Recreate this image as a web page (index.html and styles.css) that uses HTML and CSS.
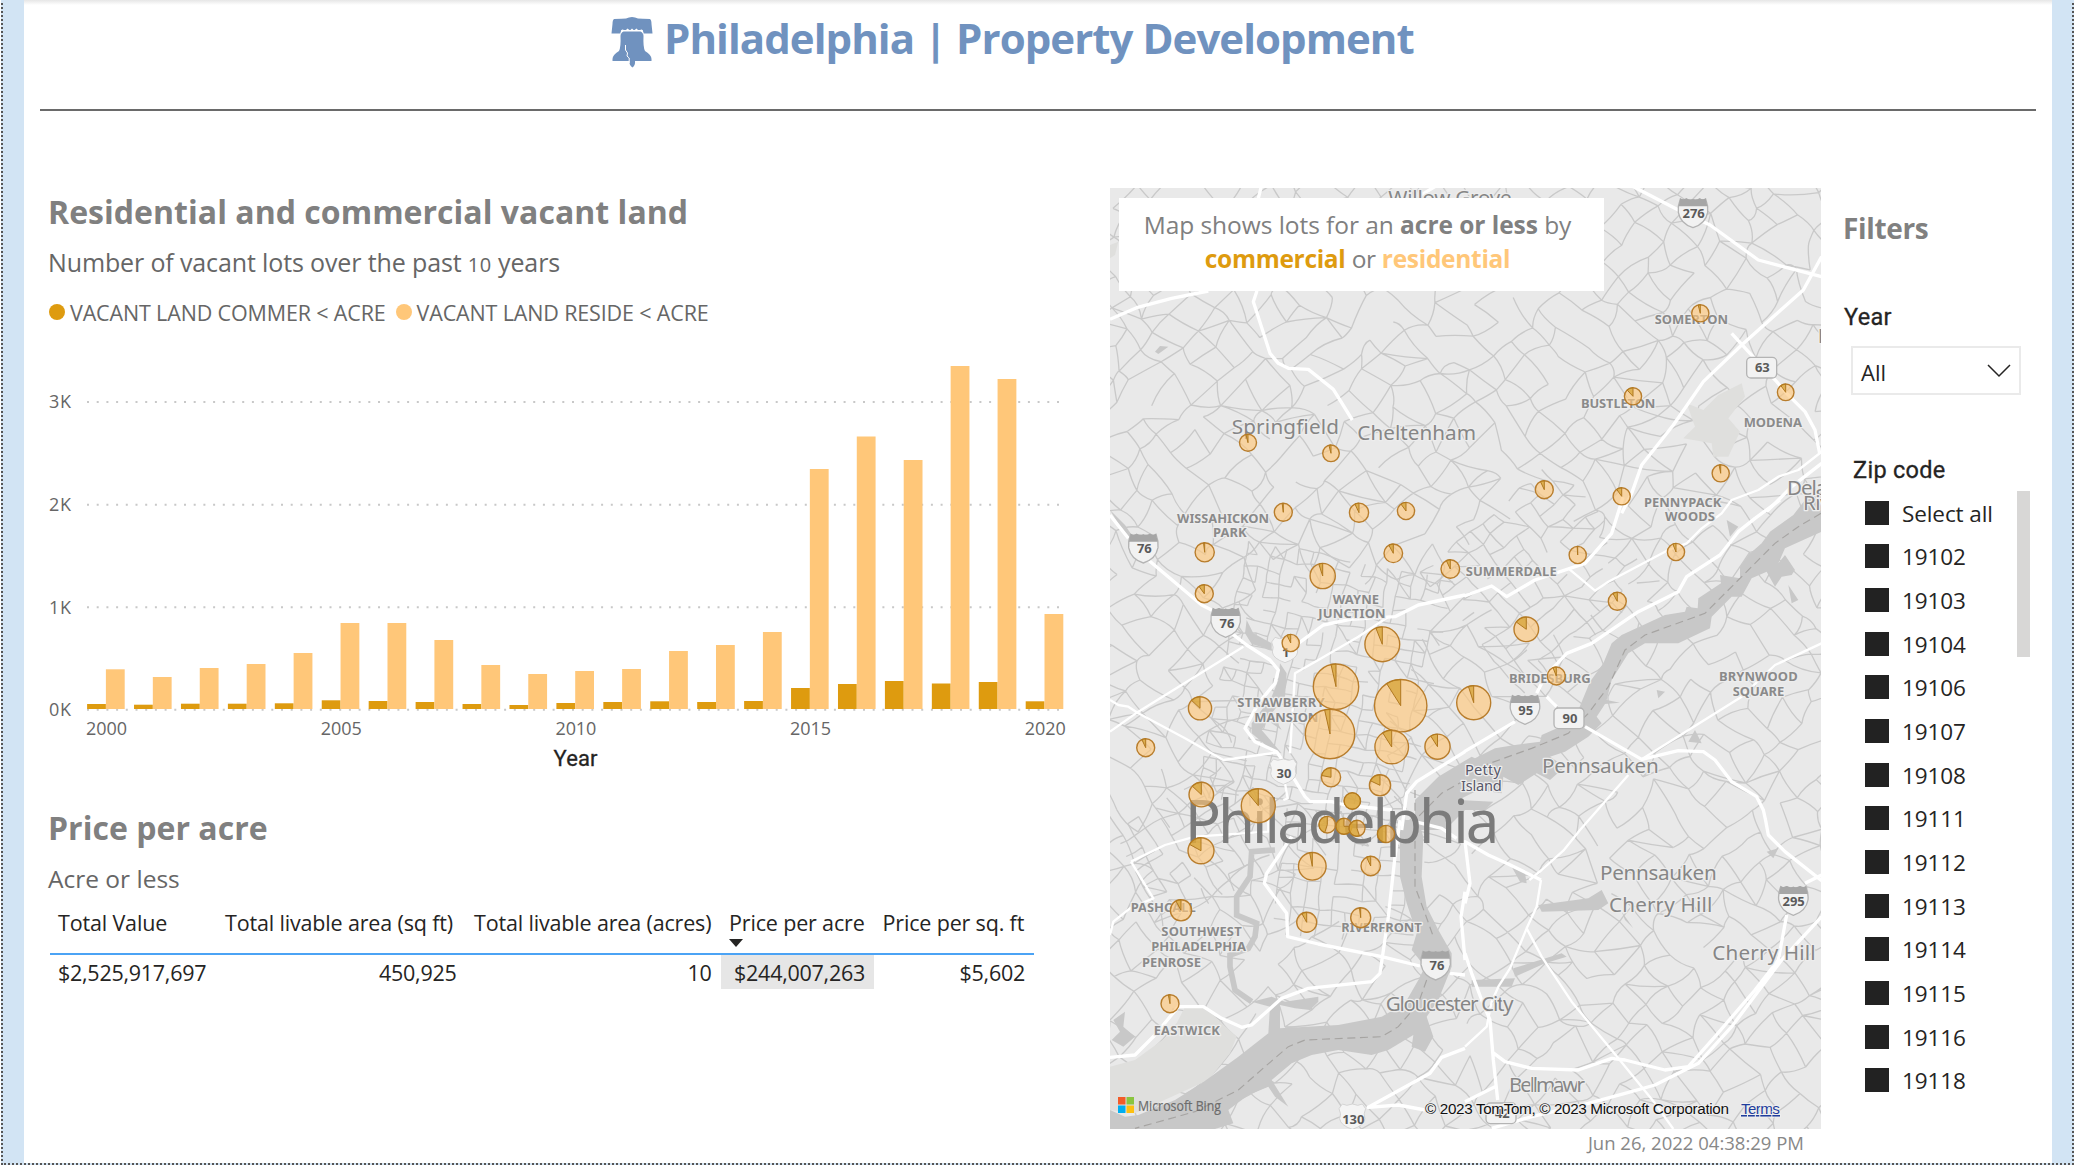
FILE: index.html
```html
<!DOCTYPE html>
<html lang="en">
<head>
<meta charset="utf-8">
<title>Philadelphia | Property Development</title>
<link rel="stylesheet" href="styles.css">
</head>
<body>
<div class="canvas">
  <div class="page">
    <header class="header">
      <svg class="bell" viewBox="0 0 42 52" width="42" height="52">
        <path d="M3 3Q12 2.500 15 2.500Q21 -.5 27 2.500Q31 2.500 39 3Q40.500 4 40.500 8L41.500 17.500H32.500L31.500 14H10.500L9.500 17.500H.5L1.500 8Q1.500 4 3 3Z"/>
        <path class="gap" d="M9.500 17.500Q10 13 12 13.500L14 15L16.500 12.500L19 14.500L21 12.500L23 14.500L25.500 12.500L28 15L30 13.500Q32 13 32.500 17.500Z"/>
        <path d="M12.500 15.500H29.500Q32.500 17 32.500 20Q32 31 34 35Q40.500 39 40.500 43V45H24Q24.500 49 21.500 51.500Q18 49 18.500 45H1.500V43Q1.500 39 8 35Q10 31 9.500 20Q9.500 17 12.500 15.500Z"/>
        <path class="crack" d="M14.500 29V34L16.500 37L16 40L18.200 42V47"/>
      </svg>
      <h1>Philadelphia | Property Development</h1>
    </header>
    <hr class="rule">
    <main class="main">
      <section class="left">
        <h2>Residential and commercial vacant land</h2>
        <p class="sub sub-a">Number of vacant lots over the past <small>10</small> years</p>
        <div class="legend">
          <i class="dot dark"></i><span>VACANT LAND COMMER &lt; ACRE</span>
          <i class="dot light"></i><span>VACANT LAND RESIDE &lt; ACRE</span>
        </div>
        <svg class="chart" id="chart" viewBox="49 340 1030 440" width="1030" height="440"></svg>
        <h2 class="price-title">Price per acre</h2>
        <p class="sub sub-b">Acre or less</p>
        <div class="table">
          <div class="th first">Total Value</div>
          <div class="th">Total livable area (sq ft)</div>
          <div class="th">Total livable area (acres)</div>
          <div class="th">Price per acre<i class="sort"></i></div>
          <div class="th">Price per sq. ft</div>
          <div class="td first">$2,525,917,697</div>
          <div class="td">450,925</div>
          <div class="td">10</div>
          <div class="td hot">$244,007,263</div>
          <div class="td">$5,602</div>
        </div>
      </section>
      <section class="mapcol">
        <div class="map">
          <svg class="mapsvg" viewBox="0 0 711 941" width="711" height="941">
            <defs>
              <g id="interstate"><path class="sh" d="M-38 -40Q-30 -34 -20 -40Q-10 -34 0 -38Q10 -34 20 -40Q30 -34 38 -40Q46 -20 44 0Q38 34 0 46Q-38 34 -44 0Q-46 -20 -38 -40Z"/><path class="shtop" d="M-38 -42Q-30 -36 -20 -42Q-10 -36 0 -40Q10 -36 20 -42Q30 -36 38 -42L43 -18H-43Z"/></g>
              <path id="us" class="sh2" d="M-30 -38Q-18 -30 0 -38Q18 -30 30 -38L40 -24Q32 -8 38 6Q36 26 0 38Q-36 26 -38 6Q-32 -8 -40 -24Z"/>
              <rect id="state" class="sh" x="-45" y="-31" width="90" height="62" rx="13"/>
            </defs>
            <g id="streets" class="streets"></g>
            <g class="park">
              <path class="tE" d="M15 740L90 720L200 640L240 560L300 560L340 600L395 650L375 700L310 780L200 830L90 880L15 870Z"/>
              <path class="tB" d="M830 610L840 650L790 715L825 755L790 830L745 830L740 790L655 775L690 740L665 670L715 690L760 645Z"/>
              <path class="tA" d="M15 195L40 185L30 225L15 235Z"/>
            </g>
            <g class="water">
              <path class="tD" d="M1070 -20L1020 0L985 45L915 95L890 130L850 165L825 200L825 235L765 225L768 250L700 295L698 325L665 320L660 335L600 345L470 405L440 430L415 490L375 545L340 630L320 665L230 705L225 725L150 735L90 745L30 775L20 770L-80 830L-150 900L-150 990L-60 990L0 930L60 930L85 905L-20 900L40 870L110 880L115 830L160 855L215 820L255 840L300 800L255 770L300 755L370 710L410 670L395 650L420 612L465 608L425 600L440 540L490 460L540 430L640 430L735 385L740 350L800 290L830 290L860 235L905 215L930 260L950 230L980 225L990 210L960 165L940 190L960 145L1070 95Z"/>
              <path class="tB" d="M1070 920L1030 960L1000 1000L1070 1000Z"/>
              <path class="tE" d="M885 0L940 0L955 50L950 170L965 260L1000 330L1040 400L1040 440L1000 540L965 590L985 650L960 695L920 680L925 645L850 690L800 705L700 690L620 705L560 730L500 780L550 860L510 830L490 800L430 825L370 870L385 910L330 927L15 927V870L60 890L100 885L210 840L290 790L400 710L490 640L495 560L440 545L500 530L540 545L640 530L640 545L615 570L570 565L525 555L525 625L700 615L830 590L900 550L940 480L960 440L920 390L935 340L905 250L885 170Z"/>
              <path class="tE" d="M25 600L60 575L55 620L90 650L55 680L20 660L45 635Z"/>
              <path class="tC" d="M425 360L445 400L500 430V450L440 432L420 400ZM525 490L545 520L540 590L500 640L470 690L530 760L500 750L440 700V670L500 590L520 540ZM500 640L530 690L500 670Z"/>
              <path class="tC" d="M15 30L60 75L90 120L60 105Z"/>
              <path class="tD" d="M970 255L1000 300L980 310ZM785 60L820 80L795 110ZM575 570L600 575L580 595ZM690 690L710 730L670 725Z"/>
              <path class="tF" d="M220 255L370 235L410 210L430 250L400 270L230 275ZM140 140L180 160L185 190L165 185ZM145 445L290 400L305 410L240 430L150 470ZM470 275L505 325L480 300ZM905 95L940 85L925 115ZM20 480L150 475L140 500L20 500Z"/>
              <path class="tA" d="M150 515L165 498L190 500L160 522Z"/>
            </g>
            <path class="creek tE" d="M510 90L440 95L435 170L395 230V285L455 310L450 350L430 385L375 405V440L390 510L440 545"/>
            <g class="ferry">
              <path class="tD" d="M1068 40L1000 80L930 130L720 340L540 405L480 450L430 560L370 640L310 700L200 745L60 795"/>
              <path class="tC" d="M1080 840L1010 880L940 950"/>
              <path class="tE" d="M930 -90V200L960 280L985 350M965 480L940 550L880 620L830 650L600 660L550 680L480 740L400 810L270 875L90 925"/>
            </g>
            <g class="road">
              <path class="tA" d="M470 15L460 55L455 335L445 365L495 520L520 550L550 565L610 568L685 628L742 720M15 418L95 383L200 355L310 333M940 50L990 20"/>
              <path class="tB" d="M505 20L640 90L735 135L880 240L1070 290M1070 230L1015 330L830 495L715 605L625 735L530 855L500 940L470 1000M800 460L850 515L935 605L965 640L1020 695L1050 750L1064 820M1070 850L980 920L905 995"/>
              <path class="tD" d="M474 -8L440 100L360 190L210 240L125 290L80 258L-2 288M945 0L870 55L820 95L765 165L665 230L640 275L520 335L380 430L305 460L240 530L215 580M-2 755L150 665M245 590L275 620M360 680L530 778L640 752L715 755L750 780L800 845L875 890L895 930L902 962L910 1005L960 1055L1070 1142"/>
              <path class="tC" d="M15 45L70 115M130 180L290 315L330 335M380 400L425 435L495 480L520 510L510 550L460 610L420 685L450 725L515 755L545 800L600 890L615 905L680 905L720 915L860 930M580 430L655 375L735 358L870 350L940 315L1080 285M1080 755L935 845L905 880L890 990"/>
              <path class="tE" d="M885 0L870 110L850 290L825 460L800 485L610 505L530 535L440 615L410 622L350 595L295 560L220 560L150 645L90 705L15 712M560 50L485 160L478 190L545 280L548 350L640 372L830 410L945 438M1035 460L1080 465M1080 685L1010 712L975 760L790 862L880 855L960 870M1080 215L1068 290L1080 420M930 5L1010 25L1055 55"/>
              <path class="tF" d="M228 180L125 130L70 105L0 65L15 190L0 250M0 400L20 460L50 540L75 600L85 720L98 840M80 695L120 725L200 745L340 750L440 715L480 720L600 750L670 740L750 650L870 510L940 420L965 285M80 925L200 890L370 850L480 820L570 795L700 730L800 620L950 420L1070 290M0 845L90 800M1020 190L1070 165"/>
            </g>
            <g class="road thin">
              <path class="tB" d="M1070 815L1000 870L940 890L880 930L800 960L770 1000L710 1045L665 1090L610 1110L430 1205L390 1232L310 1165"/>
              <path class="tC" d="M15 695L100 635L415 440M15 600L40 615L70 620L100 640L240 715L355 780L520 757M555 760L570 520L640 480L760 410L850 350M540 850L548 895L535 900"/>
              <path class="tD" d="M530 778L830 590L930 495L1070 430M490 825L345 990L295 1052L230 1110L193 1140"/>
              <path class="tE" d="M78 125L180 75L270 50L490 35V0M78 125L145 235L75 265L25 305L15 345"/>
              <path class="tF" d="M228 180L215 260L185 325L135 445L100 500L80 545L65 620L0 680M185 325L230 410L320 545L460 715L570 850L625 927"/>
            </g>
            <g class="shields">
              <g class="tB"><use href="#interstate" x="684" y="97"/><text x="686" y="115">276</text><use href="#state" x="890" y="563"/><text x="892" y="577">63</text></g>
              <g class="tC"><use href="#interstate" x="115" y="143"/><text x="118" y="160">76</text><use href="#interstate" x="362" y="366"/><text x="366" y="383">76</text><use href="#us" x="540" y="450"/><text x="542" y="470">1</text><use href="#us" x="535" y="815"/><text x="537" y="834">30</text></g>
              <g class="tD"><use href="#interstate" x="180" y="627"/><text x="182" y="645">95</text><use href="#state" x="312" y="655"/><text x="315" y="670">90</text></g>
              <g class="tE"><use href="#interstate" x="992" y="434"/><text x="996" y="451">76</text><use href="#us" x="742" y="890"/><text x="745" y="911">130</text></g>
              <g class="tF"><use href="#interstate" x="985" y="240"/><text x="986" y="258">295</text><use href="#state" x="108" y="880"/><text x="112" y="893">42</text></g>
            </g>
            <g class="town">
              <g class="tA"><text x="850" y="76" textLength="370">Willow Grove</text><text x="380" y="762" textLength="322">Springfield</text><text x="757" y="781" textLength="356">Cheltenham</text></g>
              <g class="tB"><text x="1058" y="490">Bensalem</text><text x="966" y="945" textLength="250">Delaware</text><text x="1014" y="989" textLength="140">River</text></g>
              <g class="tD"><text x="231" y="819" textLength="350">Pennsauken</text></g>
              <g class="tE"><text x="842" y="573" textLength="384">Gloucester City</text></g>
              <g class="tF"><text x="405" y="179" textLength="350">Pennsauken</text><text x="432" y="275" textLength="310">Cherry Hill</text><text x="742" y="420" textLength="310">Cherry Hill</text><text x="132" y="815" textLength="228">Bellmawr</text></g>
            </g>
            <g class="city"><text class="tE" x="239" y="69" textLength="944">Philadelphia</text></g>
            <g class="isle tD"><text x="0" y="824" textLength="108">Petty</text><text x="-12" y="872" textLength="122">Island</text></g>
            <g class="hood">
              <g class="tB"><text x="569" y="432" textLength="220">SOMERTON</text><text x="348" y="684" textLength="223">BUSTLETON</text><text x="836" y="742" textLength="175">MODENA</text><text x="537" y="980" textLength="232">PENNYPACK</text></g>
              <g class="tC"><text x="216" y="68" textLength="276">WISSAHICKON</text><text x="324" y="112" textLength="101">PARK</text><text x="683" y="311" textLength="139">WAYNE</text><text x="640" y="355" textLength="202">JUNCTION</text><text x="397" y="621" textLength="262">STRAWBERRY</text><text x="448" y="665" textLength="192">MANSION</text></g>
              <g class="tD"><text x="600" y="64" textLength="150">WOODS</text><text x="2" y="228" textLength="273">SUMMERDALE</text><text x="132" y="549" textLength="245">BRIDESBURG</text><text x="762" y="544" textLength="236">BRYNWOOD</text><text x="803" y="588" textLength="155">SQUARE</text></g>
              <g class="tE"><text x="77" y="277" textLength="195">PASHCALL</text><text x="169" y="349" textLength="241">SOUTHWEST</text><text x="139" y="394" textLength="284">PHILADELPHIA</text><text x="111" y="442" textLength="177">PENROSE</text><text x="709" y="336" textLength="241">RIVERFRONT</text><text x="146" y="646" textLength="199">EASTWICK</text></g>
            </g>
            <g id="pies" class="pies"></g>
            <g class="logo"><path fill="#f25c29" d="M8 909h7.500v7.500H8z"/><path fill="#8ac53f" d="M16.500 909h7.500v7.500h-7.500z"/><path fill="#00aeef" d="M8 917.500h7.500v7.500H8z"/><path fill="#fdc010" d="M16.500 917.500h7.500v7.500h-7.500z"/><text x="28" y="922.500" textLength="83" lengthAdjust="spacingAndGlyphs">Microsoft Bing</text></g>
            <g class="credit"><text x="315" y="926" textLength="304">© 2023 TomTom, © 2023 Microsoft Corporation</text><text class="terms" x="631" y="926" textLength="39">Terms</text></g>
          </svg>
          <div class="callout">
            <div>Map shows lots for an <b>acre or less</b> by</div>
            <div class="line2"><b class="c-dark">commercial</b> or <b class="c-light">residential</b></div>
          </div>
        </div>
        <div class="stamp">Jun 26, 2022 04:38:29 PM</div>
      </section>
      <aside class="filters">
        <h2 class="filters-title">Filters</h2>
        <div class="label l-year">Year</div>
        <div class="select"><span>All</span><svg width="24" height="14" viewBox="0 0 24 14"><path d="M1 1L12 12L23 1"/></svg></div>
        <div class="label l-zip">Zip code</div>
        <div class="zipbox"><div class="zips" id="zips"></div><div class="thumb"></div></div>
      </aside>
    </main>
  </div>
</div>
<script src="app.js"></script>
</body>
</html>
```
FILE: styles.css
```css
* { box-sizing: border-box; }
body { margin: 0; background: #fff; width: 2077px; height: 1166px; overflow: hidden; font-family: "Open Sans", "Noto Sans", sans-serif; color: #252423; }
h1, h2, p { margin: 0; white-space: nowrap; }
span { white-space: nowrap; }
.canvas { width: 2073px; height: 1167px; margin: -2px 0 0 1px; border: 2px dotted #555; background: #d2e4f4; padding: 0 20px 0 21px; }
.page { height: 1163px; background: linear-gradient(#e6e6e6, #fff 5px); }
.header { display: flex; height: 109px; padding: 7px 0 0 587px; }
.bell { margin-top: 9px; margin-right: 11px; fill: #7092bf; }
.bell .gap { fill: #fff; }
.bell .crack { fill: none; stroke: #fff; stroke-width: 1; }
h1 { font-size: 42px; line-height: 62px; color: #7092bf; font-weight: 700; letter-spacing: -.960px; }
.rule { margin: 0 16px; border: 0; height: 2px; background: #6a6a6a; }
.main { display: flex; padding-left: 25px; }
.left { width: 1061px; flex: none; padding-top: 79px; }
h2 { font-size: 32px; line-height: 44px; color: #808080; font-weight: 700; margin-left: -1px; letter-spacing: .030px; }
.sub { color: #666; line-height: 36px; margin: 10px 0 0 -1px; }
.sub-a { font-size: 25px; letter-spacing: -.130px; }
.sub-a small { font-size: 20px; letter-spacing: .5px; }
.sub-b { font-size: 24.500px; margin-top: 11px; }
.legend { display: flex; align-items: center; height: 30px; margin-top: 14px; font-size: 21.500px; color: #666; line-height: 30px; }
.dot { width: 16px; height: 16px; border-radius: 50%; margin-right: 5px; }
.legend span { margin-top: 1px; letter-spacing: -.150px; }
.legend span + .dot { margin-left: 10px; }
.dark { background: #de9b0f; }
.light { background: #ffc779; }
.chart { display: block; margin-top: 13px; font-size: 18px; fill: #666; }
.chart .grid { stroke: #c8c8c8; stroke-width: 2; stroke-dasharray: 2 7.7; }
.chart .c { fill: #de9b0f; }
.chart .r { fill: #ffc779; }
.chart .mid { text-anchor: middle; }
.chart .axis { font: 400 22px Roboto, sans-serif; fill: #252423; stroke: #252423; stroke-width: .3; text-anchor: middle; }
.price-title { margin-top: 26px; }
.table { display: grid; grid-template-columns: 166.500px 249px 255px 153.500px 160px; margin: 11px 0 0 1px; font-size: 21.500px; letter-spacing: -.160px; width: 984px; white-space: nowrap; }
.th { height: 47px; line-height: 30px; border-bottom: 2px solid #4ba3f5; padding-left: 8.500px; }
.th.first { padding-left: 8px; }
.td { height: 34px; line-height: 35px; text-align: right; padding-right: 9px; letter-spacing: -.260px; }
.td.first { text-align: left; padding: 0 0 0 8px; }
.hot { background: #e6e6e6; }
.sort { display: block; width: 0; margin-top: 1px; border: 7.500px solid transparent; border-top: 8px solid #252423; border-bottom: 0; }
.mapcol { width: 711px; flex: none; padding-top: 77px; }
.map { position: relative; width: 711px; height: 941px; background: #e9e9e9; }
.mapsvg { display: block; font-family: "Noto Sans", "Open Sans", sans-serif; }
.callout { position: absolute; left: 9px; top: 10px; width: 485px; height: 93px; background: #fff; color: #808080; font-size: 24.500px; letter-spacing: -.050px; line-height: 34px; text-align: center; padding: 10px 8px 0 0; }
.line2 { letter-spacing: -.300px; }
.c-dark { color: #de9b0f; }
.c-light { color: #ffc779; }
.tA { transform: translate(-5px, -8px) scale(.33333); }
.tB { transform: translate(355px, -8px) scale(.33333); }
.tC { transform: translate(-5px, 312px) scale(.33333); }
.tD { transform: translate(355px, 312px) scale(.33333); }
.tE { transform: translate(-5px, 632px) scale(.33333); }
.tF { transform: translate(355px, 632px) scale(.33333); }
.streets { fill: none; stroke: #c9c9c9; stroke-width: 1.300; stroke-linejoin: round; }
.park { fill: #dfdfdd; }
.water { fill: #c8c8c8; }
.creek { fill: none; stroke: #c8c8c8; stroke-width: 17; }
.ferry { fill: none; stroke: #a6a4a2; stroke-width: 3.500; stroke-dasharray: 24 14; }
.road { fill: none; stroke: #fff; stroke-width: 10; stroke-linejoin: round; }
.road.thin { stroke-width: 7; }
.sh { fill: #f2f2f2; stroke: #b4b4b4; stroke-width: 4; }
.shtop { fill: #a6a6a6; }
.sh2 { fill: #f4f4f4; stroke: #d4d4d4; stroke-width: 3; }
.shields text { font-size: 39px; font-weight: 700; fill: #5a5a5a; text-anchor: middle; }
.town text, .hood text, .isle text { paint-order: stroke; stroke: #ededed; stroke-width: 8; stroke-linejoin: round; }
.town { font-size: 62px; fill: #868686; }
.hood { font-size: 39px; font-weight: 700; fill: #8a8a8a; }
.isle { font-size: 44px; fill: #58586a; }
.city { font-size: 180px; fill: #7b7b7b; }
.pies .base { fill: #ffc779; fill-opacity: .64; stroke: #b87d2c; stroke-width: 1.400; }
.pies .slice { fill: #cf9a20; fill-opacity: .62; stroke: #b07820; stroke-width: 1; }
.logo text { font: 14.500px "Open Sans", sans-serif; fill: #6c6c6c; stroke: #6c6c6c; stroke-width: .2; }
.credit { font: 15.300px "Liberation Sans", Arial, sans-serif; fill: #111; }
.credit text { paint-order: stroke; stroke: #eee; stroke-width: 2; }
.credit .terms { fill: #1f3d9c; text-decoration: underline; }
.stamp { text-align: right; padding-right: 17px; font-size: 18.500px; line-height: 28px; color: #888; }
.filters { width: 208px; padding: 97px 0 0 23px; flex: none; }
.filters-title { font-size: 28px; line-height: 40px; letter-spacing: -.350px; }
.label { font: 400 23.500px/32px Roboto, sans-serif; -webkit-text-stroke: .3px #252423; letter-spacing: .300px; }
.l-year { margin-top: 53px; }
.select { width: 170px; height: 49px; margin: 13px 0 0 7px; border: 2px solid #eaeaea; display: flex; align-items: center; justify-content: space-between; padding: 3px 8px 0; font-size: 22px; line-height: 40px; }
.select svg { fill: none; stroke: #252423; stroke-width: 1.500; margin-top: -3px; }
.l-zip { margin: 59px 0 0 9px; }
.zipbox { display: flex; justify-content: space-between; width: 186px; margin-top: 5px; }
.zips { padding-left: 21px; font-size: 22.500px; letter-spacing: -.100px; }
.zip { display: flex; align-items: center; height: 43.650px; line-height: 43px; }
.zip span { padding-top: 1px; }
.box { width: 24px; height: 24px; background: #222; margin-right: 13px; }
.thumb { width: 13px; height: 166px; background: #d8d7d6; }
```
FILE: app.js
```javascript
const NS = 'http://www.w3.org/2000/svg';
function add(parent, tag, attrs, text) {
  const e = document.createElementNS(NS, tag);
  for (const k in attrs) e.setAttribute(k, attrs[k]);
  if (text !== undefined) e.textContent = text;
  parent.appendChild(e);
  return e;
}

// Column chart: bar heights in pixels, 2000 to 2020
const commercial = [5, 4.3, 5.3, 5.3, 5.7, 8.7, 8, 7, 5, 4, 6, 7, 7.7, 7, 8, 21, 25, 28, 25.5, 27, 7.7];
const residential = [39.7, 32, 41, 45, 56, 86, 86, 69, 44, 35, 38, 40, 58, 64, 77, 240, 272.5, 249, 343, 330, 95];
const chart = document.getElementById('chart');
[['3K', 402], ['2K', 504.7], ['1K', 607.2], ['0K', 709.8]].forEach(([t, y]) => {
  add(chart, 'line', { class: 'grid', x1: 87, x2: 1059, y1: y, y2: y });
  add(chart, 'text', { x: 49, y: y + 6.300, textLength: 22 }, t);
});
commercial.forEach((h, i) => {
  const x = 87.1 + i * 46.93;
  add(chart, 'rect', { class: 'c', x, y: 709 - h, width: 18.8, height: h });
  const r = residential[i];
  add(chart, 'rect', { class: 'r', x: x + 18.8, y: 709 - r, width: 18.8, height: r });
  if (i % 5 === 0) add(chart, 'text', { class: 'mid', x: x + 19.5, y: 735, textLength: 41 }, String(2000 + i));
});
add(chart, 'text', { class: 'axis', x: 575.5, y: 765.5, textLength: 44 }, 'Year');

// Side streets: jittered lattices, each district with its own pitch and bearing
let seed = 7;
const rnd = () => (seed = (seed * 16807) % 2147483647) / 2147483647;
const districts = [
  { x: 215, y: 500, w: 200, h: 260, step: 13, angle: .2, jitter: 4, keep: .65 },
  { x: 240, y: 690, w: 140, h: 120, step: 14, angle: .12, jitter: 3, keep: .75 },
  { x: 85, y: 660, w: 120, h: 100, step: 16, angle: -.5, jitter: 5, keep: .65 },
  { x: 430, y: 390, w: 170, h: 160, step: 16, angle: -.7, jitter: 5, keep: .6 }
];
const inside = (p, b) => {
  const c = Math.cos(b.angle), s = Math.sin(b.angle), dx = p[0] - b.x, dy = p[1] - b.y;
  return Math.abs(dx * c + dy * s) < b.w / 2 - 6 && Math.abs(dy * c - dx * s) < b.h / 2 - 6;
};
function lattice({ x, y, w, h, step, angle, jitter, keep }, holes = []) {
  const n = Math.ceil(w / step), m = Math.ceil(h / step), c = Math.cos(angle), s = Math.sin(angle), pts = [];
  for (let j = 0; j <= m; j++) for (let i = 0; i <= n; i++) {
    const u = (i - n / 2) * step + (rnd() - .5) * jitter, v = (j - m / 2) * step + (rnd() - .5) * jitter;
    pts.push([x + u * c - v * s, y + u * s + v * c]);
  }
  let d = '';
  const seg = (a, b) => {
    const mx = (a[0] + b[0]) / 2 + (rnd() - .5) * jitter * .5, my = (a[1] + b[1]) / 2 + (rnd() - .5) * jitter * .5;
    if (holes.some(k => inside(a, k) && inside(b, k))) return;
    d += `M${a[0].toFixed(1)} ${a[1].toFixed(1)}Q${mx.toFixed(1)} ${my.toFixed(1)} ${b[0].toFixed(1)} ${b[1].toFixed(1)}`;
  };
  for (let j = 0; j < m; j++) for (let i = 0; i < n; i++) {
    const k = j * (n + 1) + i;
    if (rnd() < keep) seg(pts[k], pts[k + 1]);
    if (rnd() < keep) seg(pts[k], pts[k + n + 1]);
    if (rnd() < .12) seg(pts[k], pts[k + n + 2]);
  }
  add(document.getElementById('streets'), 'path', { d });
}
lattice({ x: 355, y: 470, w: 1250, h: 1250, step: 25, angle: -.75, jitter: 17, keep: .8 }, districts);
districts.forEach(b => lattice(b));

// Pie markers: x, y, radius, share of commercial lots
const pies = [
  [138, 254.7, 8.5, .04], [221, 265.3, 8.3, .04],
  [590.3, 125.3, 8.6, .04], [523, 208.3, 8.6, .12], [675.7, 204.3, 8.3, .1], [610.7, 285.3, 8.6, .03], [434.3, 301.7, 9, .07], [511.7, 308.3, 8.6, .1],
  [173.3, 324.3, 9, .02], [249, 324.7, 9.6, .07], [296, 323, 8.6, .1], [94.7, 364.3, 9.6, .02], [94.3, 405.7, 9, .1], [283.3, 365.3, 9.3, .08], [340.3, 381, 9.3, .07], [212.7, 388, 12.6, .05], [180.7, 455, 8.6, .07],
  [272.3, 456.3, 17.4, .06], [226, 498.7, 22.7, .035], [220, 546, 24.7, .035], [290.7, 517.7, 26.2, .09], [281.7, 559, 16.8, .09], [327.5, 558.7, 12.6, .09], [90, 520.3, 11.6, .13], [35.7, 559.7, 9, .07],
  [91.3, 606.6, 12.3, .13], [148.3, 617.7, 17, .11], [221, 589.3, 9.6, .22], [270, 597.3, 10.6, .18], [242.3, 613, 8.2, 1],
  [467.7, 367, 8.6, .01], [566, 364, 8.6, .06], [507.3, 413.3, 9, .08], [416.3, 441.3, 12.3, .15], [446.3, 488, 9, .06], [363.7, 514.7, 17, .05],
  [217.3, 636.7, 8.3, .45], [234, 638.3, 8, .75], [247, 640.3, 8, .55], [276, 646, 8.6, .5], [91, 662.7, 13, .17], [202.3, 678.3, 13.8, .03], [260.7, 678, 9.7, .07], [71, 722.3, 10.6, .08], [196.7, 734.3, 10, .08], [250.7, 729.7, 10, .02], [60, 815.7, 9, .03]
];
const layer = document.getElementById('pies');
for (const [x, y, r, p] of pies) {
  add(layer, 'circle', { class: 'base', cx: x, cy: y, r });
  if (p === 1) { add(layer, 'circle', { class: 'slice', cx: x, cy: y, r }); continue; }
  const a = -p * Math.PI * 2, ex = x + Math.sin(a) * r, ey = y - Math.cos(a) * r;
  add(layer, 'path', { class: 'slice', d: `M${x} ${y}V${y - r}A${r} ${r} 0 ${p > .5 ? 1 : 0} 0 ${ex} ${ey}Z` });
}

document.getElementById('zips').innerHTML = ['Select all', 19102, 19103, 19104, 19106, 19107, 19108, 19111, 19112, 19113, 19114, 19115, 19116, 19118]
  .map(z => `<div class="zip"><i class="box"></i><span>${z}</span></div>`).join('');
```
